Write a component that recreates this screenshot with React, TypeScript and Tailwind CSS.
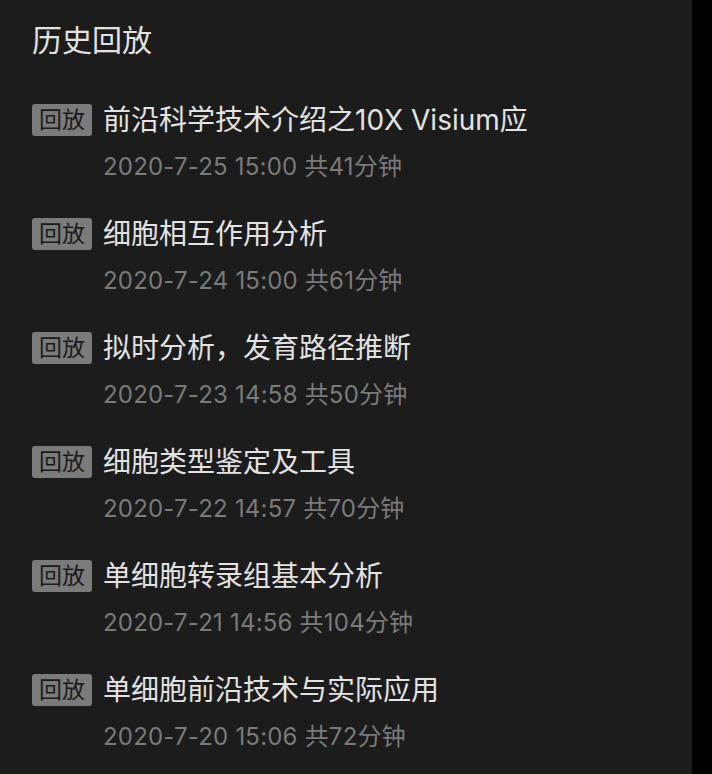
const sessions = [
  { title: '前沿科学技术介绍之10X Visium应', date: '2020-7-25 15:00', mins: 41 },
  { title: '细胞相互作用分析', date: '2020-7-24 15:00', mins: 61 },
  { title: '拟时分析，发育路径推断', date: '2020-7-23 14:58', mins: 50 },
  { title: '细胞类型鉴定及工具', date: '2020-7-22 14:57', mins: 70 },
  { title: '单细胞转录组基本分析', date: '2020-7-21 14:56', mins: 104 },
  { title: '单细胞前沿技术与实际应用', date: '2020-7-20 15:06', mins: 72 },
]

export default function App() {
  return (
    <div
      className="flex h-[774px] w-[712px] overflow-hidden bg-black"
      style={{ fontFamily: 'Inter, "Noto Sans CJK SC", sans-serif' }}
    >
      <div className="h-full w-[692px] bg-[#1c1c1c] pl-8">
        <h1 className="mt-5 text-[30px] leading-[40px] text-[#e2e2e2]">历史回放</h1>

        <ul className="mt-11">
          {sessions.map((s) => (
            <li key={s.date} className="mb-[35px] flex gap-[11px]">
              <span className="h-8 w-[60px] shrink-0 rounded-[3px] bg-[#7b7b7b] text-center text-[23px] leading-8 text-[#1a1a1a]">
                回放
              </span>
              <div>
                <div className="text-[28px] leading-8 text-[#e2e2e2]">{s.title}</div>
                <div className="mt-[15px] text-[24px] leading-8 tracking-[0.2px] text-[#7a7a7a]">
                  {s.date} 共{s.mins}分钟
                </div>
              </div>
            </li>
          ))}
        </ul>
      </div>
    </div>
  )
}
